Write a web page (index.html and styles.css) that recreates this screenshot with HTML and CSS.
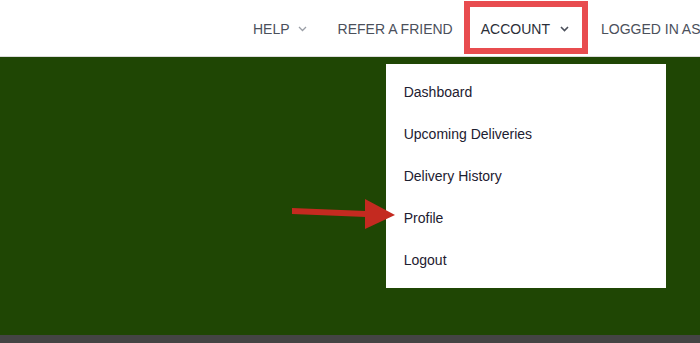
FILE: index.html
```html
<!DOCTYPE html>
<html lang="en">
<head>
    <meta charset="UTF-8">
    <meta name="viewport" content="width=device-width, initial-scale=1.0">
    <title>Account</title>
    <link rel="stylesheet" href="styles.css">
</head>
<body>
    <header class="topbar">
        <nav class="nav">
            <a class="nav-item nav-help" href="#">HELP
                <svg class="chev" width="9" height="6" viewBox="0 0 9 6"><polyline points="1,1 4.5,4.5 8,1" fill="none" stroke="currentColor" stroke-width="1.3"/></svg>
            </a>
            <a class="nav-item nav-refer" href="#">REFER A FRIEND</a>
            <div class="nav-item nav-account">
                <span>ACCOUNT</span>
                <svg class="chev" width="9" height="6" viewBox="0 0 9 6"><polyline points="1,1 4.5,4.5 8,1" fill="none" stroke="currentColor" stroke-width="1.6"/></svg>
                <ul class="dropdown">
                    <li><a href="#">Dashboard</a></li>
                    <li><a href="#">Upcoming Deliveries</a></li>
                    <li><a href="#">Delivery History</a></li>
                    <li><a href="#">Profile</a></li>
                    <li><a href="#">Logout</a></li>
                </ul>
            </div>
            <a class="nav-item nav-logged" href="#">LOGGED IN AS</a>
        </nav>
    </header>

    <main class="hero">
        <svg class="arrow" width="110" height="36" viewBox="0 0 110 36">
            <polygon points="2,13 76,16 76,22 2,19" fill="#c42a20"/>
            <polygon points="75,4 105,20 75,34" fill="#c42a20"/>
        </svg>
    </main>

    <footer class="bottombar"></footer>
</body>
</html>
```

FILE: styles.css
```css
body {
    margin: 0;
    padding: 0;
    font-family: "Liberation Sans", Arial, sans-serif;
    overflow: hidden;
}
a {
    text-decoration: none;
    color: inherit;
}
.topbar {
    height: 56px;
    border-bottom: 1px solid #dcdcdc;
    background: #fff;
    white-space: nowrap;
}
.nav {
    display: flex;
    align-items: center;
    height: 54px;
    padding: 2px 0 0 253px;
    font-size: 14px;
    color: #4b505b;
}
.nav-item {
    flex-shrink: 0;
    display: flex;
    align-items: center;
}
.chev {
    margin-left: 8px;
    color: #9a9ea6;
}
.nav-help {
    margin-right: 31px;
}
.nav-refer {
    margin-right: 11px;
}
.nav-account {
    position: relative;
    box-sizing: border-box;
    align-self: flex-start;
    height: 53px;
    margin-top: -1px;
    border: 6px solid #e84c4f;
    padding: 3px 13px 0 11px;
    color: #2b2e37;
}
.nav-account .chev {
    margin-left: 10px;
    color: #4b505b;
}
.nav-logged {
    margin-left: 13px;
}
.dropdown {
    position: absolute;
    left: -84px;
    top: 57px;
    width: 280px;
    margin: 0;
    padding: 7px 0;
    list-style: none;
    background: #fff;
    z-index: 10;
}
.dropdown li a {
    display: flex;
    align-items: center;
    height: 42px;
    padding: 0 18px;
    color: #1d2030;
    font-size: 14px;
}
.hero {
    position: relative;
    height: 278px;
    background: #1f4604;
}
.arrow {
    position: absolute;
    left: 290px;
    top: 138px;
    z-index: 20;
}
.bottombar {
    height: 8px;
    background: #444;
}
```
